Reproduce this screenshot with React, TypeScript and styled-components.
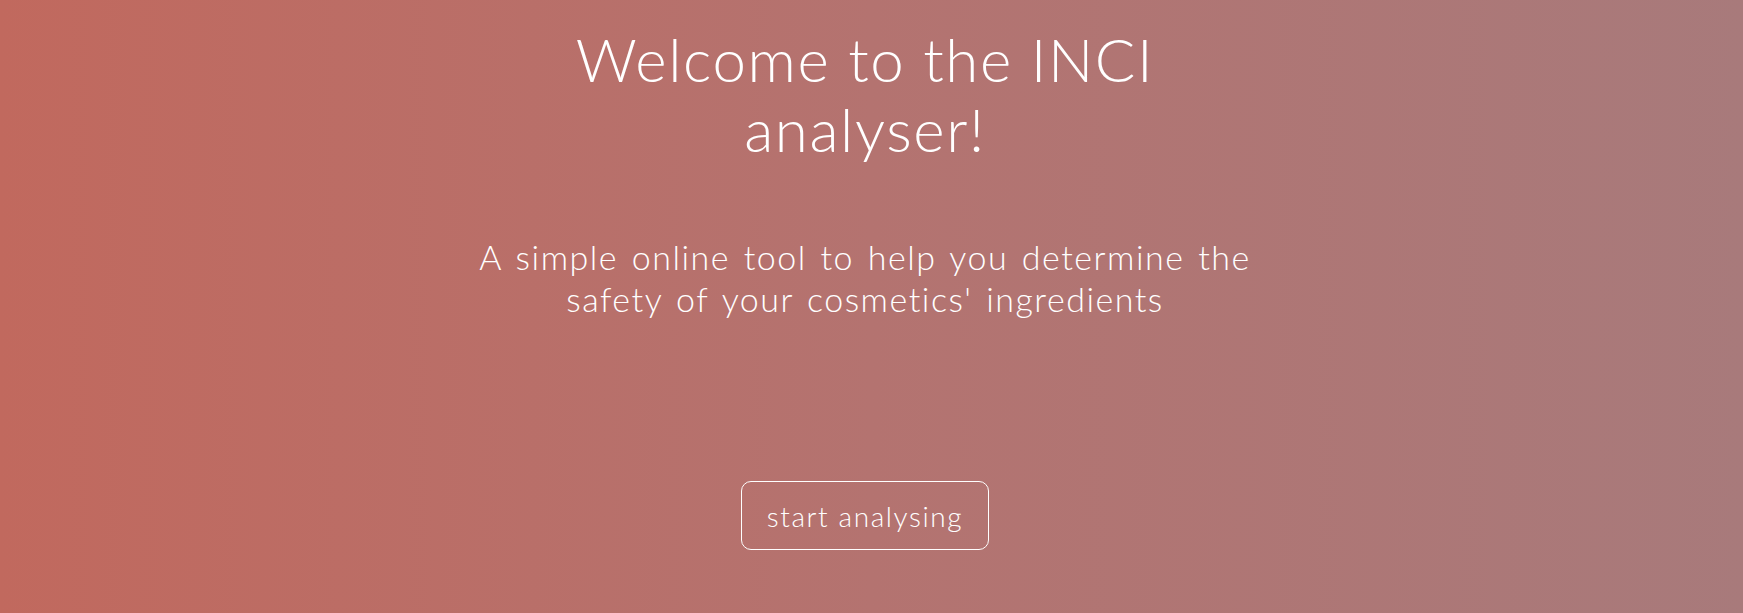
import React from "react";
import styled, { createGlobalStyle } from "styled-components";

const Global = createGlobalStyle`
  html, body { margin: 0; padding: 0; }
  body { font-family: Lato, "Open Sans", sans-serif; }
`;

const Hero = styled.section`
  box-sizing: border-box;
  width: 100%;
  height: 613px;
  padding: 24px 13px 0 0;
  display: flex;
  flex-direction: column;
  align-items: center;
  color: #ffffff;
  background: linear-gradient(90deg, #c1695e 0%, #b47370 50%, #a87a7b 100%);
  overflow: hidden;
`;

const Title = styled.h1`
  margin: 0;
  max-width: 660px;
  font-family: Lato, sans-serif;
  font-weight: 300;
  font-size: 60px;
  line-height: 70px;
  text-align: center;
  letter-spacing: 1.6px;
`;

const Subtitle = styled.p`
  margin: 72px 0 0;
  max-width: 810px;
  font-family: Lato, sans-serif;
  font-weight: 300;
  font-size: 34px;
  line-height: 42px;
  text-align: center;
  letter-spacing: 1.5px;
  word-spacing: 3px;
`;

const StartButton = styled.button`
  margin-top: 161px;
  box-sizing: border-box;
  width: 248px;
  height: 69px;
  padding: 0;
  border: 1px solid #ffffff;
  border-radius: 10px;
  background: transparent;
  color: #ffffff;
  font-family: Lato, sans-serif;
  font-weight: 300;
  font-size: 28px;
  letter-spacing: 1.6px;
  cursor: pointer;
`;

export default function App() {
  return (
    <>
      <Global />
      <Hero>
        <Title>Welcome to the INCI analyser!</Title>
        <Subtitle>
          A simple online tool to help you determine the safety of your cosmetics' ingredients
        </Subtitle>
        <StartButton>start analysing</StartButton>
      </Hero>
    </>
  );
}
